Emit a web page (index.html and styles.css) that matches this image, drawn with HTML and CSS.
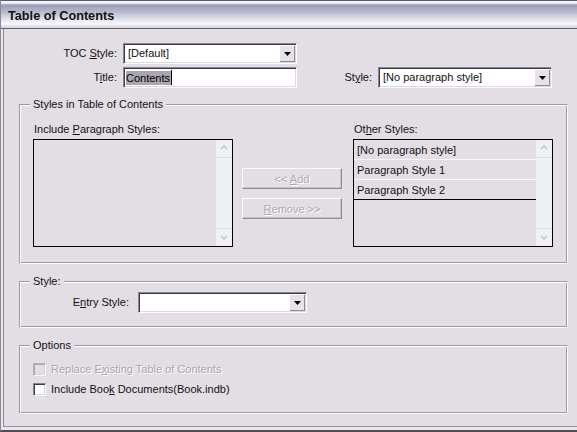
FILE: index.html
```html
<!DOCTYPE html>
<html lang="en">
<head>
    <meta charset="UTF-8">
    <title>Table of Contents</title>
    <link rel="stylesheet" href="styles.css">
</head>
<body>
<div class="window">
    <div class="titlebar">Table of Contents</div>

    <div class="dialog">
        <div class="row">
            <span class="label label-main">TOC <u>S</u>tyle:</span>
            <div class="select">
                <span class="value">[Default]</span>
                <span class="drop"><svg width="7" height="4" viewBox="0 0 7 4"><polygon points="0,0 7,0 3.5,4" fill="#000"/></svg></span>
            </div>
        </div>

        <div class="row row-title">
            <span class="label label-main">T<u>i</u>tle:</span>
            <div class="textbox"><span class="selected">Contents</span><span class="caret"></span></div>
            <span class="label label-style">St<u>y</u>le:</span>
            <div class="select">
                <span class="value">[No paragraph style]</span>
                <span class="drop"><svg width="7" height="4" viewBox="0 0 7 4"><polygon points="0,0 7,0 3.5,4" fill="#000"/></svg></span>
            </div>
        </div>

        <div class="group group-styles">
            <span class="group-title">Styles in Table of Contents</span>
            <div class="columns">
                <div class="column">
                    <div class="list-label">Include <u>P</u>aragraph Styles:</div>
                    <div class="listbox">
                        <div class="items"></div>
                        <div class="scrollbar">
                            <span class="arrow arrow-up"><svg width="16" height="16" viewBox="0 0 16 16"><polyline points="5,9 8,6 11,9" fill="none" stroke="#c2bec8" stroke-width="1.3"/></svg></span>
                            <span class="arrow arrow-down"><svg width="16" height="16" viewBox="0 0 16 16"><polyline points="5,7 8,10 11,7" fill="none" stroke="#c2bec8" stroke-width="1.3"/></svg></span>
                        </div>
                    </div>
                </div>

                <div class="buttons">
                    <button class="btn" disabled>&lt;&lt; <u>A</u>dd</button>
                    <button class="btn" disabled><u>R</u>emove &gt;&gt;</button>
                </div>

                <div class="column">
                    <div class="list-label">Ot<u>h</u>er Styles:</div>
                    <div class="listbox">
                        <div class="items">
                            <div class="item">[No paragraph style]</div>
                            <div class="item">Paragraph Style 1</div>
                            <div class="item item-last">Paragraph Style 2</div>
                        </div>
                        <div class="scrollbar">
                            <span class="arrow arrow-up"><svg width="16" height="16" viewBox="0 0 16 16"><polyline points="5,9 8,6 11,9" fill="none" stroke="#c2bec8" stroke-width="1.3"/></svg></span>
                            <span class="arrow arrow-down"><svg width="16" height="16" viewBox="0 0 16 16"><polyline points="5,7 8,10 11,7" fill="none" stroke="#c2bec8" stroke-width="1.3"/></svg></span>
                        </div>
                    </div>
                </div>
            </div>
        </div>

        <div class="group group-entry">
            <span class="group-title">Style:</span>
            <div class="row">
                <span class="label label-entry">E<u>n</u>try Style:</span>
                <div class="select select-entry">
                    <span class="value"></span>
                    <span class="drop"><svg width="7" height="4" viewBox="0 0 7 4"><polygon points="0,0 7,0 3.5,4" fill="#000"/></svg></span>
                </div>
            </div>
        </div>

        <div class="group group-options">
            <span class="group-title">Options</span>
            <div class="check-row disabled">
                <span class="checkbox"></span>
                <span>Replace E<u>x</u>isting Table of Contents</span>
            </div>
            <div class="check-row">
                <span class="checkbox"></span>
                <span>Include Boo<u>k</u> Documents(Book.indb)</span>
            </div>
        </div>
    </div>
</div>
</body>
</html>
```

FILE: styles.css
```css
body { margin: 0; background: #e3dee4; }
u { text-decoration: underline; text-underline-offset: 1px; }

.window {
    width: 577px; height: 432px; box-sizing: border-box;
    display: flex; flex-direction: column;
    background: #ece6ea;
    border-top: 1px solid #5a5a68; border-left: 1px solid #8a8898; border-bottom: 2px solid #4e4e5a;
    padding-bottom: 3px;
    font-family: "Liberation Sans", Arial, sans-serif; font-size: 11px; color: #111;
}

.titlebar {
    flex: none; height: 28px; box-sizing: border-box;
    padding: 8px 0 0 7px; line-height: 15px;
    font-size: 12.7px; font-weight: bold; color: #111;
    border-bottom: 1px solid #5e5e6c;
    background: linear-gradient(#f6f6fa 0, #f6f6fa 2px, #9e9eba 4px, #b4b4ca 10px, #e6e6ee 19px, #f8f8fb 23px, #d6d6e0 26px);
}

.dialog {
    flex: 1; margin-left: 2px;
    border-left: 1px solid #8a8898; border-bottom: 1px solid #9490a0;
    background: #e3dee4;
    padding: 14px 9px 0 15px;
}

.row { display: flex; align-items: center; height: 21px; line-height: 13px; }
.row-title { margin-top: 3px; }
.label { text-align: right; white-space: nowrap; }
.label-main { width: 98px; margin-right: 6px; }
.label-style { width: 75px; margin-right: 6px; }
.label-entry { width: 96px; margin-right: 9px; }

.select, .textbox {
    width: 174px; height: 21px; box-sizing: border-box;
    display: flex; align-items: center;
    background: #fff;
    border: 1px solid; border-color: #8a8794 #fbfbfd #fbfbfd #8a8794;
    box-shadow: inset 1px 1px 0 #3c3a42, inset -1px -1px 0 #dcd8de;
}
.select-entry { width: 169px; }
.select .value { flex: 1; padding-left: 4px; white-space: nowrap; }
.select .drop {
    width: 16px; height: 17px; margin-right: 1px; box-sizing: border-box;
    display: flex; align-items: center; justify-content: center;
    background: #e6e2e8;
    box-shadow: inset 1px 1px 0 #fff, inset -1px -1px 0 #8e8a96;
}

.textbox { padding-left: 2px; }
.selected { background: #aaa7b2; color: #000; line-height: 14px; padding-right: 1px; }
.caret { width: 1px; height: 15px; background: #000; }

.group {
    position: relative;
    border: 1px solid; border-color: #9c98a6 #fff #fff #9c98a6;
    box-shadow: inset 1px 1px 0 #fff, inset -1px -1px 0 #9c98a6;
}
.group-title {
    position: absolute; top: -7px; left: 10px;
    padding: 0 3px; line-height: 13px;
    background: #e3dee4;
}
.group-styles { margin-top: 16px; padding: 18px 0 16px 13px; }
.group-entry { margin-top: 17px; padding: 10px 0 14px 13px; }
.group-options { margin-top: 17px; padding: 13px 0 14px 13px; }

.columns { display: flex; }
.column { width: 200px; }
.list-label { line-height: 13px; margin-bottom: 3px; padding-left: 1px; }
.listbox {
    height: 108px; box-sizing: border-box;
    display: flex;
    border: 1px solid #000;
    background: #e3dee4;
}
.items { flex: 1; }
.item {
    height: 20px; box-sizing: border-box;
    padding: 2px 0 0 3px; line-height: 17px;
    border-bottom: 1px solid #f8f6fa;
    white-space: nowrap;
}
.item-last { border-bottom-color: #000; }
.scrollbar {
    width: 16px;
    display: flex; flex-direction: column; justify-content: space-between;
    background: #eff0f4;
}
.arrow { height: 17px; display: flex; }
.arrow-up { border-bottom: 1px solid #dcdbe2; }
.arrow-down { border-top: 1px solid #dcdbe2; }

.buttons {
    width: 100px; margin: 0 11px 0 9px; padding-top: 45px;
    display: flex; flex-direction: column; gap: 9px;
}
.btn {
    width: 100px; height: 21px; padding: 0;
    font: inherit; color: #aca8b0; text-shadow: 1px 1px 0 #fff;
    background: #e3dee4;
    border: 1px solid; border-color: #fbfbfd #8e8a96 #8e8a96 #fbfbfd;
    box-shadow: inset -1px -1px 0 #c6c2ca;
}

.check-row { display: flex; align-items: center; height: 20px; line-height: 13px; }
.checkbox {
    width: 13px; height: 13px; box-sizing: border-box; margin-right: 5px;
    background: #fff;
    border: 1px solid; border-color: #86828e #fbfbfd #fbfbfd #86828e;
    box-shadow: inset 1px 1px 0 #3e3c44, inset -1px -1px 0 #d8d4da;
}
.disabled { color: #a9a5ad; text-shadow: 1px 1px 0 #fff; }
.disabled .checkbox {
    background: #e3dee4;
    border-color: #b4b0ba #fbfbfd #fbfbfd #b4b0ba;
    box-shadow: inset 1px 1px 0 #a8a4ae, inset -1px -1px 0 #d8d4da;
}
```
